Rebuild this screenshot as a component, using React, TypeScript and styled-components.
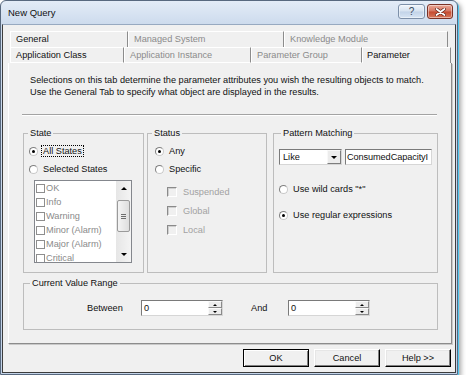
import styled, { createGlobalStyle } from "styled-components";

const GlobalStyle = createGlobalStyle`
  html, body { margin: 0; padding: 0; background: #ffffff; }
  body {
    font-family: "Liberation Sans", Arial, sans-serif;
    font-size: 9.2px;
    color: #111;
  }
  * { box-sizing: border-box; }
`;

const Window = styled.div`
  width: 458px;
  height: 375px;
  display: flex;
  flex-direction: column;
  padding: 0 1px 1px;
  border: 1px solid #58697f;
  border-radius: 6px 6px 0 0;
  background: linear-gradient(#e3ecf7, #cddbed 23px, #c3d3e8);
  box-shadow: 1px 1px 0 #4fc6ee, 3px 3px 5px rgba(0, 0, 0, 0.35);
`;

const TitleBar = styled.div`
  height: 23px;
  display: flex;
  align-items: flex-start;
  gap: 2px;
  padding: 0 3px 0 6px;
`;

const Title = styled.div`
  flex: 1;
  margin-top: 6px;
  line-height: 12px;
  font-size: 9.5px;
`;

const CaptionButton = styled.div<{ $close?: boolean }>`
  width: ${(p) => (p.$close ? 26 : 27)}px;
  height: 15px;
  margin-top: 3px;
  display: flex;
  align-items: center;
  justify-content: center;
  border-radius: 3px;
  border: 1px solid ${(p) => (p.$close ? "#7a3226" : "#7d90a9")};
  background: ${(p) =>
    p.$close
      ? "linear-gradient(#eaa897, #d57560 48%, #c44a2f 52%, #d8775a)"
      : "linear-gradient(#f0f5fb, #d6e2f0 48%, #c2d3e8 52%, #d8e5f4)"};
  box-shadow: inset 0 0 0 1px rgba(255, 255, 255, 0.45);
  color: #3a4a60;
  font-size: 10px;
`;

const Client = styled.div`
  flex: 1;
  display: flex;
  flex-direction: column;
  padding: 6px 3px 0 5px;
  background: #f0f0f0;
  border: 1px solid #3d3d3d;
  border-top-color: #97a9c0;
`;

const TabRow = styled.div`
  display: flex;
  height: 16px;
  margin-left: 2px;
`;

const Tab = styled.div<{ $w: number; $dim?: boolean; $line?: boolean }>`
  width: ${(p) => p.$w}px;
  height: 16px;
  padding-left: ${(p) => (p.$line === false ? 4 : 5)}px;
  line-height: 14px;
  white-space: nowrap;
  color: ${(p) => (p.$dim ? "#8b8b8b" : "#111")};
  border-top: 1px solid #ffffff;
  border-left: 1px solid #ffffff;
  border-right: 1px solid #8c8c8c;
  border-bottom: ${(p) => (p.$line ? "1px solid #ffffff" : "0")};
`;

const Panel = styled.div`
  height: 281px;
  display: flex;
  flex-direction: column;
  border-left: 1px solid #ffffff;
  border-right: 1px solid #8c8c8c;
  border-bottom: 1px solid #8c8c8c;
  box-shadow: 1px 1px 0 #c9c9c9;
`;

const Intro = styled.p`
  margin: 11px 0 0 21px;
  line-height: 12px;
  white-space: nowrap;
`;

const Separator = styled.div`
  margin: 16px 14px 0 13px;
  border-top: 1px solid #a3a3a3;
  border-bottom: 1px solid #ffffff;
`;

const GroupRow = styled.div<{ $mt: number }>`
  display: flex;
  margin: ${(p) => p.$mt}px 0 0 14px;
`;

const Group = styled.fieldset<{ $w: number; $h: number; $gap?: number }>`
  width: ${(p) => p.$w}px;
  height: ${(p) => p.$h}px;
  margin: 0 0 0 ${(p) => p.$gap ?? 0}px;
  padding: 0;
  min-width: 0;
  border: 1px solid #bdbdbd;
`;

const Legend = styled.legend<{ $m: number }>`
  margin-left: ${(p) => p.$m}px;
  padding: 0 2px;
  line-height: 12px;
`;

const GroupBody = styled.div<{ $pt: number; $pl: number }>`
  display: flex;
  flex-direction: column;
  padding: ${(p) => p.$pt}px 0 0 ${(p) => p.$pl}px;
`;

const OptionRow = styled.div<{ $h?: number; $mt?: number; $indent?: number; $gap?: number }>`
  display: flex;
  align-items: center;
  height: ${(p) => p.$h ?? 18}px;
  margin-top: ${(p) => p.$mt ?? 0}px;
  margin-left: ${(p) => p.$indent ?? 0}px;
  gap: ${(p) => p.$gap ?? 5}px;
  white-space: nowrap;
`;

const Radio = styled.span<{ $on?: boolean }>`
  width: 9px;
  height: 9px;
  flex: none;
  display: flex;
  align-items: center;
  justify-content: center;
  border-radius: 50%;
  border: 1px solid #7f7f7f;
  border-right-color: #c9c9c9;
  border-bottom-color: #c9c9c9;
  background: #ffffff;
  &::after {
    content: "";
    width: 3px;
    height: 3px;
    border-radius: 50%;
    background: ${(p) => (p.$on ? "#000" : "transparent")};
  }
`;

const Focused = styled.span`
  outline: 1px dotted #000;
  padding: 0 1px;
  margin-left: -1px;
`;

const DimBox = styled.span`
  width: 10px;
  height: 10px;
  flex: none;
  border-top: 1px solid #8a8a8a;
  border-left: 1px solid #8a8a8a;
  border-right: 1px solid #ffffff;
  border-bottom: 1px solid #ffffff;
  box-shadow: inset 1px 1px 0 #cfcfcf;
  background: #f0f0f0;
`;

const DimText = styled.span`
  color: #a2a2a2;
`;

const ListBox = styled.div`
  width: 98px;
  height: 83px;
  margin: 2px 0 0 5px;
  display: flex;
  border: 1px solid #84878d;
  background: #ffffff;
  overflow: hidden;
`;

const ListItems = styled.div`
  flex: 1;
  overflow: hidden;
`;

const ListItem = styled.div`
  height: 14px;
  display: flex;
  align-items: center;
  gap: 1px;
  padding-left: 1px;
  color: #8a8a8a;
  white-space: nowrap;
`;

const ListCheck = styled.span`
  width: 9px;
  height: 9px;
  flex: none;
  border: 1px solid #8e8e8e;
  background: #ffffff;
`;

const ScrollBar = styled.div`
  width: 15px;
  display: flex;
  flex-direction: column;
  background: linear-gradient(90deg, #e6e6e6, #f4f4f4);
`;

const ScrollArrow = styled.div`
  height: 15px;
  display: flex;
  align-items: center;
  justify-content: center;
`;

const Thumb = styled.div`
  height: 32px;
  margin: 4px 1px 0;
  display: flex;
  flex-direction: column;
  align-items: center;
  justify-content: center;
  gap: 1px;
  border: 1px solid #9a9a9a;
  border-radius: 2px;
  background: linear-gradient(90deg, #f4f4f4, #dedede);
`;

const Grip = styled.span`
  width: 5px;
  height: 1px;
  background: #6e6e6e;
`;

const Triangle = styled.span<{ $up?: boolean; $size?: number }>`
  width: 0;
  height: 0;
  border-left: ${(p) => p.$size ?? 3}px solid transparent;
  border-right: ${(p) => p.$size ?? 3}px solid transparent;
  ${(p) =>
    p.$up
      ? `border-bottom: ${Math.ceil((p.$size ?? 3) * 0.7)}px solid #000;`
      : `border-top: ${Math.ceil((p.$size ?? 3) * 0.7)}px solid #000;`}
`;

const Spacer = styled.div`
  flex: 1;
`;

const FieldRow = styled.div`
  display: flex;
  gap: 3px;
`;

const Combo = styled.div`
  width: 63px;
  height: 16px;
  display: flex;
  border: 1px solid #7a7a7a;
  border-right-color: #d6d6d6;
  border-bottom-color: #d6d6d6;
  background: #ffffff;
`;

const ComboText = styled.span`
  flex: 1;
  padding-left: 3px;
  line-height: 14px;
`;

const ComboButton = styled.span`
  width: 14px;
  display: flex;
  align-items: center;
  justify-content: center;
  background: #ececec;
  border: 1px solid #f8f8f8;
  border-right-color: #7d7d7d;
  border-bottom-color: #7d7d7d;
`;

const TextBox = styled.div<{ $w: number }>`
  width: ${(p) => p.$w}px;
  height: 16px;
  display: flex;
  border: 1px solid #7a7a7a;
  border-right-color: #d6d6d6;
  border-bottom-color: #d6d6d6;
  background: #ffffff;
  overflow: hidden;
`;

const TextValue = styled.span`
  flex: 1;
  padding-left: 1px;
  line-height: 14px;
  white-space: nowrap;
  letter-spacing: -0.1px;
`;

const SpinButtons = styled.span`
  width: 14px;
  display: flex;
  flex-direction: column;
`;

const SpinHalf = styled.span`
  flex: 1;
  display: flex;
  align-items: center;
  justify-content: center;
  background: #ececec;
  border: 1px solid #fafafa;
  border-right-color: #8a8a8a;
  border-bottom-color: #8a8a8a;
`;

const RangeRow = styled.div`
  display: flex;
  align-items: center;
  height: 16px;
  margin: 11px 0 0 63px;
`;

const RangeLabel = styled.span<{ $w: number; $ml?: number }>`
  width: ${(p) => p.$w}px;
  margin-left: ${(p) => p.$ml ?? 0}px;
`;

const ButtonRow = styled.div`
  display: flex;
  justify-content: flex-end;
  gap: 5px;
  margin-top: 5px;
  padding-right: 1px;
`;

const Button = styled.div<{ $default?: boolean }>`
  width: 66px;
  height: 18px;
  display: flex;
  align-items: center;
  justify-content: center;
  background: #f0f0f0;
  border: 1px solid ${(p) => (p.$default ? "#000" : "#ffffff")};
  border-right-color: #000;
  border-bottom-color: #000;
  box-shadow: ${(p) =>
    p.$default
      ? "inset 1px 1px 0 #ffffff, inset -1px -1px 0 #808080"
      : "inset -1px -1px 0 #808080, inset 1px 1px 0 #e6e6e6"};
`;

function Spin() {
  return (
    <TextBox $w={82}>
      <TextValue style={{ paddingLeft: 2 }}>0</TextValue>
      <SpinButtons>
        <SpinHalf>
          <Triangle $up $size={2} />
        </SpinHalf>
        <SpinHalf>
          <Triangle $size={2} />
        </SpinHalf>
      </SpinButtons>
    </TextBox>
  );
}

const states = ["OK", "Info", "Warning", "Minor (Alarm)", "Major (Alarm)", "Critical"];

export default function App() {
  return (
    <>
      <GlobalStyle />
      <Window>
        <TitleBar>
          <Title>New Query</Title>
          <CaptionButton>?</CaptionButton>
          <CaptionButton $close>
            <svg width="11" height="8" viewBox="0 0 11 8">
              <path
                d="M1.5 1 L9.5 7 M9.5 1 L1.5 7"
                stroke="#5a1e14"
                strokeWidth="3.2"
                strokeLinecap="round"
              />
              <path
                d="M1.5 1 L9.5 7 M9.5 1 L1.5 7"
                stroke="#ffffff"
                strokeWidth="1.8"
                strokeLinecap="round"
              />
            </svg>
          </CaptionButton>
        </TitleBar>
        <Client>
          <TabRow>
            <Tab $w={118}>General</Tab>
            <Tab $w={156} $dim>
              Managed System
            </Tab>
            <Tab $w={164} $dim>
              Knowledge Module
            </Tab>
          </TabRow>
          <TabRow>
            <Tab $w={114} $line>
              Application Class
            </Tab>
            <Tab $w={127} $dim $line>
              Application Instance
            </Tab>
            <Tab $w={111} $dim $line>
              Parameter Group
            </Tab>
            <Tab $w={89} $line={false}>
              Parameter
            </Tab>
          </TabRow>
          <Panel>
            <Intro>
              Selections on this tab determine the parameter attributes you wish the resulting objects to match.
              <br />
              Use the General Tab to specify what object are displayed in the results.
            </Intro>
            <Separator />
            <GroupRow $mt={11}>
              <Group $w={121} $h={146}>
                <Legend $m={4}>State</Legend>
                <GroupBody $pt={3} $pl={5}>
                  <OptionRow>
                    <Radio $on />
                    <Focused>All States</Focused>
                  </OptionRow>
                  <OptionRow>
                    <Radio />
                    <span>Selected States</span>
                  </OptionRow>
                  <ListBox>
                    <ListItems>
                      {states.map((s) => (
                        <ListItem key={s}>
                          <ListCheck />
                          {s}
                        </ListItem>
                      ))}
                    </ListItems>
                    <ScrollBar>
                      <ScrollArrow>
                        <Triangle $up />
                      </ScrollArrow>
                      <Thumb>
                        <Grip />
                        <Grip />
                        <Grip />
                      </Thumb>
                      <Spacer />
                      <ScrollArrow>
                        <Triangle />
                      </ScrollArrow>
                    </ScrollBar>
                  </ListBox>
                </GroupBody>
              </Group>
              <Group $w={120} $h={146} $gap={3}>
                <Legend $m={4}>Status</Legend>
                <GroupBody $pt={3} $pl={7}>
                  <OptionRow>
                    <Radio $on />
                    <span>Any</span>
                  </OptionRow>
                  <OptionRow>
                    <Radio />
                    <span>Specific</span>
                  </OptionRow>
                  {["Suspended", "Global", "Local"].map((s, i) => (
                    <OptionRow key={s} $h={19} $mt={i === 0 ? 4 : 0} $indent={12} $gap={6}>
                      <DimBox />
                      <DimText>{s}</DimText>
                    </OptionRow>
                  ))}
                </GroupBody>
              </Group>
              <Group $w={165} $h={146} $gap={6}>
                <Legend $m={7}>Pattern Matching</Legend>
                <GroupBody $pt={10} $pl={5}>
                  <FieldRow>
                    <Combo>
                      <ComboText>Like</ComboText>
                      <ComboButton>
                        <Triangle />
                      </ComboButton>
                    </Combo>
                    <TextBox $w={87}>
                      <TextValue>ConsumedCapacityI</TextValue>
                    </TextBox>
                  </FieldRow>
                  <OptionRow $mt={15}>
                    <Radio />
                    <span>Use wild cards "*"</span>
                  </OptionRow>
                  <OptionRow $mt={8}>
                    <Radio $on />
                    <span>Use regular expressions</span>
                  </OptionRow>
                </GroupBody>
              </Group>
            </GroupRow>
            <GroupRow $mt={4}>
              <Group $w={415} $h={53}>
                <Legend $m={6}>Current Value Range</Legend>
                <RangeRow>
                  <RangeLabel $w={54}>Between</RangeLabel>
                  <Spin />
                  <RangeLabel $w={37} $ml={28}>
                    And
                  </RangeLabel>
                  <Spin />
                </RangeRow>
              </Group>
            </GroupRow>
          </Panel>
          <ButtonRow>
            <Button $default>OK</Button>
            <Button>Cancel</Button>
            <Button>Help &gt;&gt;</Button>
          </ButtonRow>
        </Client>
      </Window>
    </>
  );
}
